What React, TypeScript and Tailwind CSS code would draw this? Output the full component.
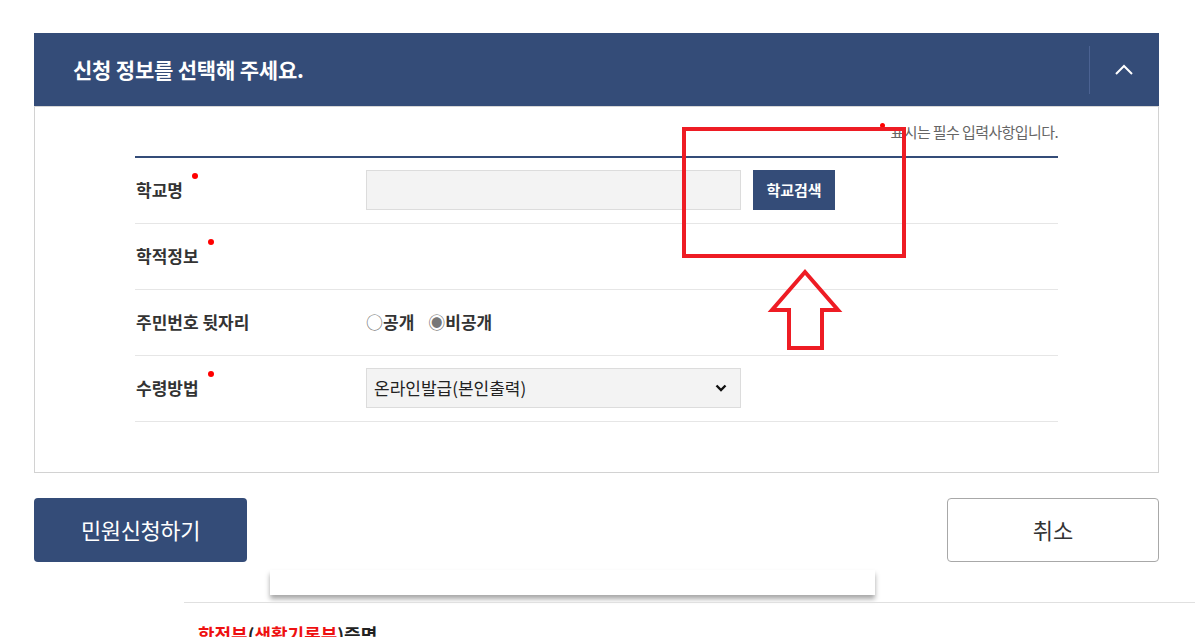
import React from 'react';

const FONT = "font-['Noto_Sans_CJK_KR','Noto_Sans',sans-serif]";

const Row = ({ label, required, children }: { label: string; required?: boolean; children?: React.ReactNode }) => (
  <div className="flex h-[66px] items-center border-b border-[#e6e6e6]">
    <div className="w-[231px] pl-[1px] text-[17px] font-bold text-[#333]">
      <span className="inline-flex items-start">
        {label}
        {required && <span className="ml-[9px] -mt-[4px] h-[6px] w-[6px] rounded-full bg-[#ff0000]"></span>}
      </span>
    </div>
    <div className="flex flex-1 items-center">{children}</div>
  </div>
);

const App = () => {
  return (
    <div className={`relative h-[637px] w-[1195px] overflow-hidden bg-white ${FONT}`}>
      <section className="pl-[34px] pr-[36px] pt-[33px]">
        {/* HEADER */}
        <div className="flex h-[74px] items-center justify-between border-b border-[#d6d6d6] bg-[#344c78] pl-[39px]">
          <h2 className="text-[21px] font-bold tracking-[-0.2px] text-white">신청 정보를 선택해 주세요.</h2>
          <div className="flex h-[48px] w-[70px] items-center justify-center border-l border-[#4b6292] pr-[2px]">
            <svg width="20" height="12" viewBox="0 0 20 12" fill="none">
              <path d="M2 10 L10 2 L18 10" stroke="white" strokeWidth="2" />
            </svg>
          </div>
        </div>

        {/* FORM BODY */}
        <div className="border border-t-0 border-[#d2d2d2] px-[100px] pb-[50px] pt-[14px]">
          <p className="flex justify-end text-[15px] tracking-[-0.6px] text-[#666]">
            <span className="mr-[6px] mt-[2px] h-[5px] w-[5px] rounded-full bg-[#ff0000]"></span>
            표시는 필수 입력사항입니다.
          </p>
          <div className="mt-[12px] border-t-2 border-[#344c78]">
            <Row label="학교명" required>
              <div className="h-[40px] w-[375px] border border-[#dcdcdc] bg-[#f3f3f3]"></div>
              <button className="ml-[12px] h-[40px] w-[82px] bg-[#344c78] text-[15px] font-bold text-white">학교검색</button>
            </Row>
            <Row label="학적정보" required />
            <Row label="주민번호 뒷자리">
              <div className="flex items-center text-[17px] font-bold text-[#333]">
                <span className="font-normal text-[#777]">○</span>
                <span>공개</span>
                <span className="ml-[14px] font-normal text-[#777]">◉</span>
                <span>비공개</span>
              </div>
            </Row>
            <Row label="수령방법" required>
              <div className="flex h-[40px] w-[375px] items-center justify-between border border-[#dcdcdc] bg-[#f3f3f3] pl-[7px] pr-[13px] text-[17px] text-[#222]">
                <span>온라인발급(본인출력)</span>
                <svg width="12" height="8" viewBox="0 0 12 8" fill="none">
                  <path d="M1.5 1.5 L6 6 L10.5 1.5" stroke="#111" strokeWidth="2.4" />
                </svg>
              </div>
            </Row>
          </div>
        </div>

        {/* ACTIONS */}
        <div className="mt-[25px] flex justify-between">
          <button className="h-[64px] w-[213px] rounded-[4px] bg-[#344c78] text-[22px] tracking-[-0.4px] text-white">민원신청하기</button>
          <button className="h-[64px] w-[212px] rounded-[4px] border border-[#a8a8a8] bg-white text-[22px] text-[#333]">취소</button>
        </div>
      </section>

      {/* NEXT ITEM */}
      <div className="ml-[184px] mt-[8px]">
        <div className="ml-[86px] h-[25px] w-[605px] bg-white shadow-[0_4px_5px_rgba(0,0,0,0.35)]"></div>
        <div className="mt-[7px] border-t border-[#e0e0e0] pl-[14px] pt-[18px] text-[18px] font-bold">
          <span className="text-[#ee1111]">학적부</span>
          <span className="text-[#222]">(</span>
          <span className="text-[#ee1111]">생활기록부</span>
          <span className="text-[#222]">)증명</span>
        </div>
      </div>

      {/* ANNOTATION */}
      <svg className="pointer-events-none absolute left-0 top-0" width="1195" height="637">
        <rect x="684" y="129" width="220" height="127" fill="none" stroke="#ee1c24" strokeWidth="4" />
        <path d="M805 272 L838 310 L822 310 L822 348 L789 348 L789 310 L772 310 Z" fill="none" stroke="#ee1c24" strokeWidth="4" strokeLinejoin="miter" />
      </svg>
    </div>
  );
};

export default App;
